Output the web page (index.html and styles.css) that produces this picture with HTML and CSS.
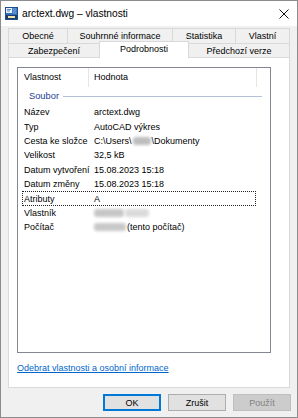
FILE: index.html
```html
<!DOCTYPE html>
<html lang="cs">
<head>
<meta charset="utf-8">
<title>arctext.dwg – vlastnosti</title>
<link rel="stylesheet" href="styles.css">
</head>
<body>
<div class="window">
  <div class="titlebar">
    <svg class="appicon" width="13" height="13" viewBox="0 0 13 13">
      <rect x="0.5" y="0.5" width="12" height="12" fill="#2f6fb8" stroke="#1d4f8f"/>
      <path d="M1 1h6v5H1z" fill="#e9f1fa"/>
      <path d="M2 2.5h4M2 4h3" stroke="#2f6fb8" stroke-width="0.8"/>
      <path d="M7.5 2h4M7.5 4h4M7.5 6h4" stroke="#9cc3ea" stroke-width="0.8"/>
      <rect x="1" y="8" width="11" height="4" fill="#1b3e6e"/>
      <rect x="3" y="9" width="7" height="2" fill="#f2e6a0"/>
    </svg>
    <span class="title">arctext.dwg – vlastnosti</span>
    <svg class="close" width="10" height="10" viewBox="0 0 10 10">
      <path d="M0.5 0.5L9.5 9.5M9.5 0.5L0.5 9.5" stroke="#111" stroke-width="1"/>
    </svg>
  </div>
  <div class="body">
    <div class="tabs">
      <div class="tabrow r1">
        <div class="tab t-obecne">Obecné</div>
        <div class="tab t-souhrn">Souhrnné informace</div>
        <div class="tab t-stat">Statistika</div>
        <div class="tab t-vlastni">Vlastní</div>
      </div>
      <div class="tabrow r2">
        <div class="tab t-zabez">Zabezpečení</div>
        <div class="tab t-podrob active">Podrobnosti</div>
        <div class="tab t-predch">Předchozí verze</div>
      </div>
    </div>
    <div class="panel">
      <div class="listbox">
        <div class="lhead">
          <span class="hc1">Vlastnost</span>
          <span class="hc2">Hodnota</span>
        </div>
        <div class="group"><span class="gtext">Soubor</span><span class="gline"></span></div>
        <div class="rows">
          <div class="row"><span class="k">Název</span><span class="v">arctext.dwg</span></div>
          <div class="row"><span class="k">Typ</span><span class="v">AutoCAD výkres</span></div>
          <div class="row"><span class="k">Cesta ke složce</span><span class="v">C:\Users\<span class="blur b-user"></span>\Dokumenty</span></div>
          <div class="row"><span class="k">Velikost</span><span class="v">32,5 kB</span></div>
          <div class="row"><span class="k">Datum vytvoření</span><span class="v">15.08.2023 15:18</span></div>
          <div class="row"><span class="k">Datum změny</span><span class="v">15.08.2023 15:18</span></div>
          <div class="row focus"><span class="k">Atributy</span><span class="v">A</span></div>
          <div class="row"><span class="k">Vlastník</span><span class="v"><span class="blur b-own1"></span><span class="blur b-own2"></span></span></div>
          <div class="row"><span class="k">Počítač</span><span class="v"><span class="blur b-pc"></span> (tento počítač)</span></div>
        </div>
      </div>
      <a class="link" href="#">Odebrat vlastnosti a osobní informace</a>
    </div>
    <div class="buttons">
      <button class="btn default">OK</button>
      <button class="btn">Zrušit</button>
      <button class="btn disabled">Použít</button>
    </div>
  </div>
</div>
</body>
</html>
```

FILE: styles.css
```css
* { box-sizing: border-box; }
html, body { margin: 0; padding: 0; background: #f0f0f0; }
body {
  font-family: "Liberation Sans", Arial, sans-serif;
  font-size: 9px;
  color: #000;
}
.window {
  width: 298px;
  height: 418px;
  border: 1px solid #8c8c8c;
  background: #f0f0f0;
  display: flex;
  flex-direction: column;
}
.titlebar {
  height: 25px;
  background: #fff;
  display: flex;
  align-items: center;
}
.appicon { margin-left: 4px; margin-top: 0px; flex: none; }
.title {
  margin-left: 4px;
  font-size: 10.2px;
  flex: 1;
}
.close { margin-right: 8px; flex: none; }
.body {
  flex: 1;
  padding: 2px 7px 0 7px;
  display: flex;
  flex-direction: column;
}
.tabs { display: flex; flex-direction: column; }
.tabrow { display: flex; }
.r1 { height: 15px; }
.r2 { height: 14px; align-items: flex-end; position: relative; z-index: 2; }
.tab {
  background: #f0f0f0;
  border: 1px solid #d9d9d9;
  border-bottom: none;
  display: flex;
  align-items: center;
  justify-content: center;
  height: 100%;
  white-space: nowrap;
  margin-right: -1px;
}
.r1 .tab { height: 15px; }
.r2 .tab { height: 14px; }
.t-obecne { width: 60px; }
.t-souhrn { width: 106px; }
.t-stat { width: 64px; }
.t-vlastni { width: 55px; }
.t-zabez { width: 92px; }
.t-podrob { width: 90px; }
.t-predch { width: 102px; }
.r2 .tab.active {
  background: #fff;
  height: 17px;
  margin-bottom: -1px;
  padding-bottom: 2px;
  position: relative;
  z-index: 3;
}
.panel {
  height: 331px;
  background: #fff;
  border: 1px solid #d9d9d9;
  padding: 9px 0 0 8px;
  display: flex;
  flex-direction: column;
}
.listbox {
  width: 254px;
  height: 286px;
  border: 1px solid #828790;
  background: #fff;
}
.lhead {
  height: 19px;
  display: flex;
  align-items: center;
}
.hc1 {
  width: 71px;
  height: 19px;
  line-height: 19px;
  padding-left: 6px;
  border-right: 1px solid #e5e5e5;
}
.hc2 {
  width: 168px;
  height: 19px;
  line-height: 19px;
  padding-left: 5px;
  border-right: 1px solid #e5e5e5;
}
.group {
  height: 18px;
  display: flex;
  align-items: center;
  padding-left: 11px;
  padding-right: 8px;
}
.gtext { color: #1e3d96; font-size: 9.3px; }
.gline {
  flex: 1;
  height: 1px;
  background: #b4c0d6;
  margin-left: 4px;
}
.rows { display: flex; flex-direction: column; }
.row {
  margin-left: 4px;
  width: 234px;
  height: 14.4px;
  border: 1px dotted transparent;
  display: grid;
  grid-template-columns: 71px 1fr;
  align-items: center;
  line-height: 12px;
  white-space: nowrap;
}
.row.focus { border-color: #222; }
.k { padding-left: 1px; }
.v { display: flex; align-items: center; }
.blur {
  display: inline-block;
  height: 8px;
  border-radius: 3px;
  filter: blur(1.6px);
  background: #c4c4c4;
}
.b-user { width: 18px; margin: 0 1px; background: #bdbdbd; }
.b-own1 { width: 30px; background: #c6c6c6; }
.b-own2 { width: 24px; background: #dadada; margin-left: 1px; }
.b-pc { width: 32px; background: #c8c8c8; margin-right: 1px; }
.link {
  margin-top: 10px;
  color: #0066cc;
  text-decoration: underline;
  line-height: 11px;
  align-self: flex-start;
}
.buttons {
  display: flex;
  justify-content: flex-end;
  gap: 7px;
  margin-top: 6px;
  margin-right: -1px;
}
.btn {
  font-family: "Liberation Sans", Arial, sans-serif;
  font-size: 9px;
  width: 58px;
  height: 17px;
  padding: 0;
  background: #e1e1e1;
  border: 1px solid #adadad;
  color: #000;
}
.btn.default { border: 2px solid #0078d7; }
.btn.disabled { background: #cccccc; border-color: #bfbfbf; color: #838383; }
```
